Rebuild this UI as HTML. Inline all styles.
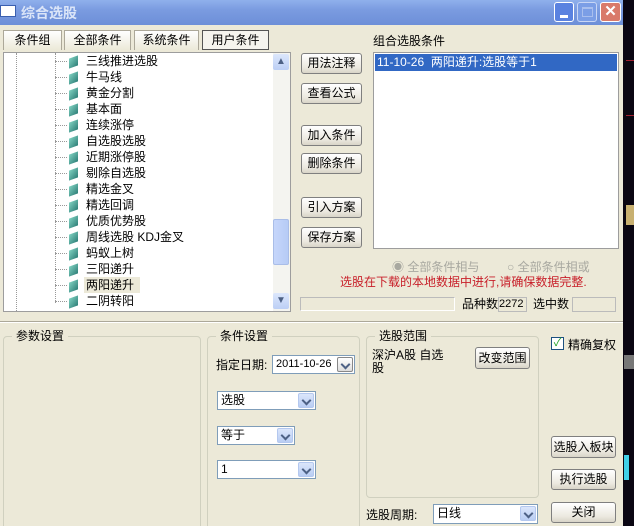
<!DOCTYPE html><html><head><meta charset="utf-8"><style>
*{margin:0;padding:0;box-sizing:border-box}
body{width:634px;height:526px;overflow:hidden;background:#0a0612;font:12px "Liberation Sans","Noto Sans CJK SC","WenQuanYi Zen Hei",sans-serif;color:#000;position:relative}
.a{position:absolute;white-space:nowrap}
#dlg{left:0;top:0;width:623px;height:526px;background:#ece9d8;overflow:hidden}
#title{left:0;top:0;width:623px;height:25px;background:linear-gradient(#8fb0ec,#7a9be0 40%,#6d8fd8);}
.btn{position:absolute;border:1px solid #7f7f7f;border-radius:3px;background:linear-gradient(#fff,#ece9e0 70%,#d8d4c8);text-align:center;line-height:18px;font-size:12px;white-space:nowrap}
.tab{position:absolute;top:30px;height:20px;border:1px solid #aca899;border-bottom:none;background:linear-gradient(#fff,#ece9d8);text-align:center;line-height:19px}
.box{position:absolute;background:#fff;border:1px solid #7f9db9}
.grp{position:absolute;border:1px solid #d0d0bf;border-radius:4px}
.lg{position:absolute;background:#ece9d8;padding:0 4px;top:-9px;left:8px;line-height:16px;white-space:nowrap}
.cb{position:absolute;background:#fff;border:1px solid #7f9db9;height:19px;line-height:17px;padding-left:3px;white-space:nowrap}
.cb i{position:absolute;right:1px;top:1px;width:16px;height:15px;background:linear-gradient(#dbe6fb,#b9cdf3);border:1px solid #b4c8ef;border-radius:2px}
.cb i:after{content:"";position:absolute;left:4px;top:3px;width:5px;height:5px;border-right:2px solid #4d6185;border-bottom:2px solid #4d6185;transform:rotate(45deg)}
.it{position:absolute;left:83px;height:16px;line-height:16px;white-space:nowrap}
.ic{position:absolute;left:66px;width:9px;height:10px;background:linear-gradient(135deg,#7fd0c0,#2e7f78);transform:skewY(-20deg)}
.dl{position:absolute;left:52px;width:12px;border-top:1px dotted #999}
#tree{left:3px;top:52px;width:270px;height:258px}
</style></head><body>
<div id="dlg" class="a">
<div id="title" class="a">
 <div class="a" style="left:0;top:5px;width:16px;height:12px;background:#fff;border:1px solid #3a5fb0"></div>
 <div class="a" style="left:21px;top:3px;color:#dbe5f8;font-weight:bold;font-size:14px">综合选股</div>
 <div class="a" style="left:554px;top:2px;width:20px;height:20px;border:1px solid #fff;border-radius:3px;background:#5a82e0"><div class="a" style="left:5px;top:12px;width:8px;height:3px;background:#fff"></div></div>
 <div class="a" style="left:577px;top:2px;width:20px;height:20px;border:1px solid #c8d6f5;border-radius:3px;background:#7b9ee6"><div class="a" style="left:4px;top:4px;width:11px;height:10px;border:1px solid #a9bfee;border-top-width:2px"></div></div>
 <div class="a" style="left:600px;top:2px;width:21px;height:20px;border:1px solid #fff;border-radius:3px;background:#d97a6a;color:#fff;font-weight:bold;text-align:center;line-height:18px;font-size:15px">✕</div>
</div>
<div class="tab" style="left:3px;width:59px">条件组</div>
<div class="tab" style="left:64px;width:67px">全部条件</div>
<div class="tab" style="left:134px;width:65px">系统条件</div>
<div class="tab" style="left:202px;width:67px;background:#f5f4ee;border:1px solid #555">用户条件</div>
<div class="box" style="left:3px;top:52px;width:288px;height:260px;border-color:#9d9d9d">
 <div class="a" style="left:12px;top:0;height:258px;border-left:1px dotted #999"></div>
 <div class="a" style="left:51px;top:0;height:250px;border-left:1px dotted #999"></div>
 <div class="a" style="left:269px;top:0;width:17px;height:258px;background:#f4f4f0">
  <div class="a" style="left:0;top:1px;width:16px;height:16px;background:linear-gradient(#dce7fc,#bccff5);border-radius:2px;color:#4d6185;text-align:center;font-size:10px;line-height:16px">▲</div>
  <div class="a" style="left:0;top:166px;width:16px;height:46px;background:linear-gradient(90deg,#c6d6fb,#b6cbf5);border:1px solid #a9bde8;border-radius:2px"></div>
  <div class="a" style="left:0;top:240px;width:16px;height:16px;background:linear-gradient(#dce7fc,#bccff5);border-radius:2px;color:#4d6185;text-align:center;font-size:10px;line-height:16px">▼</div>
 </div>
</div>
<div id="tree" class="a">
<div class="dl" style="top:9px"></div><div class="ic" style="top:5px"></div><div class="it" style="top:1px">三线推进选股</div>
<div class="dl" style="top:25px"></div><div class="ic" style="top:21px"></div><div class="it" style="top:17px">牛马线</div>
<div class="dl" style="top:41px"></div><div class="ic" style="top:37px"></div><div class="it" style="top:33px">黄金分割</div>
<div class="dl" style="top:57px"></div><div class="ic" style="top:53px"></div><div class="it" style="top:49px">基本面</div>
<div class="dl" style="top:73px"></div><div class="ic" style="top:69px"></div><div class="it" style="top:65px">连续涨停</div>
<div class="dl" style="top:89px"></div><div class="ic" style="top:85px"></div><div class="it" style="top:81px">自选股选股</div>
<div class="dl" style="top:105px"></div><div class="ic" style="top:101px"></div><div class="it" style="top:97px">近期涨停股</div>
<div class="dl" style="top:121px"></div><div class="ic" style="top:117px"></div><div class="it" style="top:113px">剔除自选股</div>
<div class="dl" style="top:137px"></div><div class="ic" style="top:133px"></div><div class="it" style="top:129px">精选金叉</div>
<div class="dl" style="top:153px"></div><div class="ic" style="top:149px"></div><div class="it" style="top:145px">精选回调</div>
<div class="dl" style="top:169px"></div><div class="ic" style="top:165px"></div><div class="it" style="top:161px">优质优势股</div>
<div class="dl" style="top:185px"></div><div class="ic" style="top:181px"></div><div class="it" style="top:177px">周线选股 KDJ金叉</div>
<div class="dl" style="top:201px"></div><div class="ic" style="top:197px"></div><div class="it" style="top:193px">蚂蚁上树</div>
<div class="dl" style="top:217px"></div><div class="ic" style="top:213px"></div><div class="it" style="top:209px">三阳递升</div>
<div class="dl" style="top:233px"></div><div class="ic" style="top:229px"></div><div class="it" style="top:225px;background:#ece9d8;padding-right:6px;margin-left:-2px;padding-left:2px">两阳递升</div>
<div class="dl" style="top:249px"></div><div class="ic" style="top:245px"></div><div class="it" style="top:241px">二阴转阳</div>
</div>
<div class="btn" style="left:301px;top:53px;width:61px;height:21px">用法注释</div>
<div class="btn" style="left:301px;top:83px;width:61px;height:21px">查看公式</div>
<div class="btn" style="left:301px;top:125px;width:61px;height:21px">加入条件</div>
<div class="btn" style="left:301px;top:153px;width:61px;height:21px">删除条件</div>
<div class="btn" style="left:301px;top:197px;width:61px;height:21px">引入方案</div>
<div class="btn" style="left:301px;top:227px;width:61px;height:21px">保存方案</div>
<div class="a" style="left:373px;top:32px">组合选股条件</div>
<div class="box" style="left:373px;top:52px;width:246px;height:197px;border-color:#9d9d9d">
 <div class="a" style="left:1px;top:1px;width:242px;height:17px;background:#3168c4;color:#fff;line-height:16px;padding-left:2px">11-10-26&nbsp; 两阳递升:选股等于1</div>
</div>
<div class="a" style="left:392px;top:258px;color:#a8a8a0">◉ 全部条件相与</div>
<div class="a" style="left:507px;top:258px;color:#a8a8a0">○ 全部条件相或</div>
<div class="a" style="left:340px;top:273px;color:#c8202a">选股在下载的本地数据中进行,请确保数据完整.</div>
<div class="a" style="left:300px;top:297px;width:155px;height:14px;border:1px solid #bbb;border-right-color:#fff;border-bottom-color:#fff"></div>
<div class="a" style="left:462px;top:295px">品种数</div>
<div class="a" style="left:498px;top:297px;width:29px;height:15px;border:1px solid #bbb;line-height:13px;font-size:11px">2272</div>
<div class="a" style="left:533px;top:295px">选中数</div>
<div class="a" style="left:572px;top:297px;width:44px;height:15px;border:1px solid #bbb"></div>
<div class="a" style="left:0;top:321px;width:623px;border-top:1px solid #aca899;border-bottom:1px solid #fff"></div>
<div class="grp" style="left:3px;top:336px;width:198px;height:195px"><div class="lg">参数设置</div></div>
<div class="grp" style="left:207px;top:336px;width:153px;height:195px"><div class="lg">条件设置</div></div>
<div class="grp" style="left:366px;top:336px;width:173px;height:162px"><div class="lg">选股范围</div></div>
<div class="a" style="left:216px;top:356px">指定日期:</div>
<div class="cb" style="left:272px;top:355px;width:83px;font-size:11px">2011-10-26<i style="background:linear-gradient(#fff,#ddd);border-color:#888"></i></div>
<div class="cb" style="left:217px;top:391px;width:99px">选股<i></i></div>
<div class="cb" style="left:217px;top:426px;width:78px">等于<i></i></div>
<div class="cb" style="left:217px;top:460px;width:99px">1<i></i></div>
<div class="a" style="left:372px;top:349px;line-height:13px">深沪A股 自选<br>股</div>
<div class="btn" style="left:475px;top:347px;width:55px;height:22px;line-height:20px">改变范围</div>
<div class="a" style="left:366px;top:506px">选股周期:</div>
<div class="cb" style="left:433px;top:504px;width:105px;height:20px">日线<i></i></div>
<div class="a" style="left:551px;top:337px;width:13px;height:13px;background:#fff;border:1px solid #1c5180;color:#21a121;font-size:11px;line-height:11px;text-align:center">✓</div>
<div class="a" style="left:568px;top:336px">精确复权</div>
<div class="btn" style="left:551px;top:436px;width:65px;height:22px;line-height:20px">选股入板块</div>
<div class="btn" style="left:551px;top:469px;width:65px;height:21px">执行选股</div>
<div class="btn" style="left:551px;top:502px;width:65px;height:21px">关闭</div>
</div>
<div class="a" style="left:626px;top:60px;width:8px;border-top:1px solid #a02030"></div>
<div class="a" style="left:626px;top:115px;width:8px;border-top:1px solid #a02030"></div>
<div class="a" style="left:626px;top:205px;width:8px;height:20px;background:#c8b070"></div>
<div class="a" style="left:624px;top:355px;width:10px;height:14px;background:#777"></div>
<div class="a" style="left:624px;top:455px;width:5px;height:25px;background:#40d0e8"></div>
</body></html>
